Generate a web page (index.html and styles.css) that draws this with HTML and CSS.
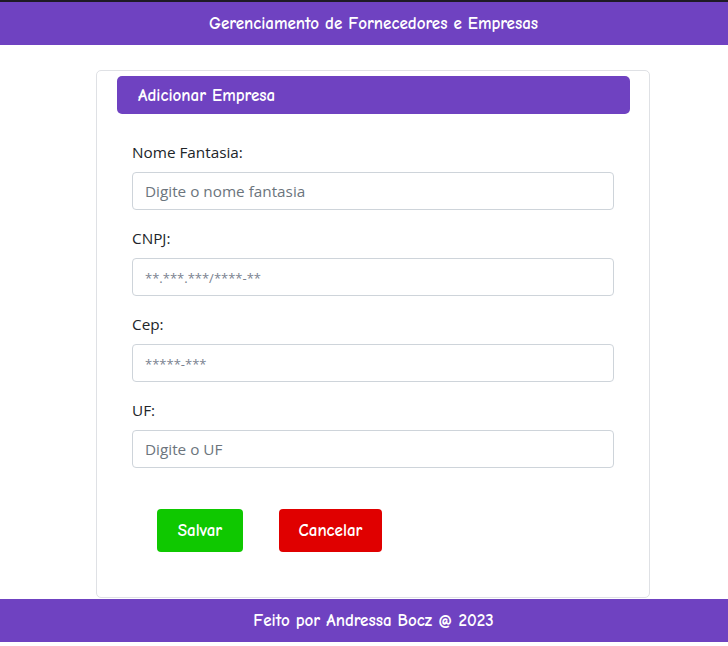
FILE: index.html
```html
<!DOCTYPE html>
<html lang="pt-BR">
<head>
<meta charset="utf-8">
<title>Gerenciamento de Fornecedores e Empresas</title>
<link rel="stylesheet" href="styles.css">
</head>
<body>
<header class="topbar">
  <h1 class="topbar-title">Gerenciamento de Fornecedores e Empresas</h1>
</header>
<main class="main">
  <section class="card">
    <h2 class="card-header">Adicionar Empresa</h2>
    <form class="form">
      <div class="field">
        <label class="field-label" for="nome">Nome Fantasia:</label>
        <input class="field-input" id="nome" type="text" placeholder="Digite o nome fantasia">
      </div>
      <div class="field">
        <label class="field-label" for="cnpj">CNPJ:</label>
        <input class="field-input field-mask" id="cnpj" type="text" placeholder="**.***.***/****-**">
      </div>
      <div class="field">
        <label class="field-label" for="cep">Cep:</label>
        <input class="field-input field-mask" id="cep" type="text" placeholder="*****-***">
      </div>
      <div class="field">
        <label class="field-label" for="uf">UF:</label>
        <input class="field-input" id="uf" type="text" placeholder="Digite o UF">
      </div>
      <div class="actions">
        <button type="button" class="btn btn-save">Salvar</button>
        <button type="button" class="btn btn-cancel">Cancelar</button>
      </div>
    </form>
  </section>
</main>
<footer class="footer">
  <p class="footer-text">Feito por Andressa Bocz @ 2023</p>
</footer>
</body>
</html>
```

FILE: styles.css
```css
* { box-sizing: border-box; }

body {
  margin: 0;
  background: #ffffff;
  font-family: "Open Sans", "Noto Sans", "Liberation Sans", sans-serif;
  color: #212529;
  border-top: 2px solid #1e1a24;
}

.topbar {
  background: #6f42c1;
  height: 43px;
  display: flex;
  align-items: center;
  justify-content: center;
  padding-left: 19px;
}

.topbar-title,
.card-header,
.btn,
.footer-text {
  font-family: "Comic Sans MS", "Comic Neue", "Lato", "Liberation Sans", sans-serif;
  font-weight: 700;
}

.topbar-title {
  margin: 0;
  color: #ffffff;
  font-size: 17px;
}

.main {
  padding: 25px 0 1px 96px;
}

.card {
  width: 554px;
  height: 528px;
  border: 1px solid #dfe1e5;
  border-radius: 5px;
  padding: 5px 19px 0 20px;
}

.card-header {
  margin: 0;
  height: 38px;
  background: #6f42c1;
  color: #ffffff;
  border-radius: 5px;
  font-size: 17px;
  display: flex;
  align-items: center;
  padding-left: 21px;
}

.form {
  padding: 26px 15px 0 15px;
}

.field {
  margin-bottom: 16px;
  display: flex;
  flex-direction: column;
}

.field-label {
  font-size: 15.3px;
  line-height: 24px;
  margin-bottom: 8px;
  color: #212529;
}

.field-input {
  height: 38px;
  width: 482px;
  border: 1px solid #ced4da;
  border-radius: 4px;
  padding: 0 12px;
  font-family: "Open Sans", "Noto Sans", "Liberation Sans", sans-serif;
  font-size: 15.3px;
  color: #212529;
}

.field-input::placeholder {
  color: #6c757d;
  opacity: 1;
}

.field-mask::placeholder {
  font-size: 13px;
  color: #7a8290;
}

.actions {
  display: flex;
  gap: 36px;
  padding-left: 25px;
  margin-top: 41px;
}

.btn {
  height: 43px;
  border: none;
  border-radius: 4px;
  color: #ffffff;
  font-size: 17px;
  padding: 0;
}

.btn-save {
  width: 86px;
  background: #0fc800;
}

.btn-cancel {
  width: 103px;
  background: #e00000;
}

.footer {
  background: #6f42c1;
  height: 43px;
  display: flex;
  align-items: center;
  justify-content: center;
  padding-left: 19px;
}

.footer-text {
  margin: 0;
  color: #ffffff;
  font-size: 17px;
}
```
